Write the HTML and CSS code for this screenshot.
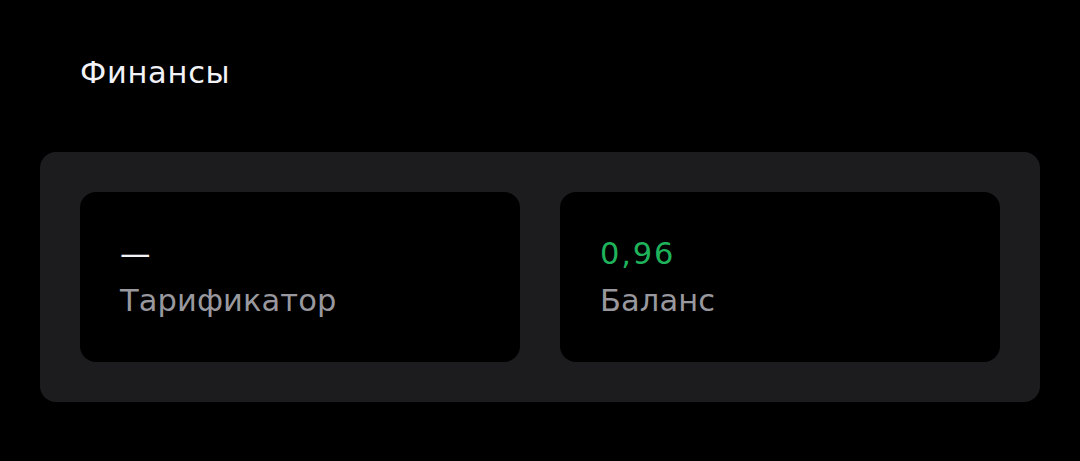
FILE: index.html
```html
<!DOCTYPE html>
<html lang="ru">
<head>
<meta charset="utf-8">
<link rel="stylesheet" href="styles.css">
</head>
<body>
<main class="page">
  <h1 class="title">Финансы</h1>
  <section class="panel">
    <div class="card">
      <div class="value">—</div>
      <div class="label">Тарификатор</div>
    </div>
    <div class="card">
      <div class="value value-green">0,96</div>
      <div class="label">Баланс</div>
    </div>
  </section>
</main>
</body>
</html>
```
FILE: styles.css
```css
html, body {
  margin: 0;
  padding: 0;
  background: #000;
}
body {
  font-family: "DejaVu Sans", Inter, sans-serif;
  color: #f2f2f7;
}
.page {
  padding: 53px 40px 0 40px;
}
.title {
  margin: 0 0 0 40px;
  font-size: 30.5px;
  font-weight: 400;
  line-height: 40px;
  letter-spacing: 0.7px;
  color: #f2f2f7;
}
.panel {
  margin-top: 59px;
  background: #1c1c1e;
  border-radius: 16px;
  padding: 40px;
  display: grid;
  grid-template-columns: 1fr 1fr;
  gap: 40px;
}
.card {
  background: #000;
  border-radius: 16px;
  height: 170px;
  padding: 0 40px;
  display: flex;
  flex-direction: column;
  justify-content: center;
  box-sizing: border-box;
}
.value {
  font-size: 30.5px;
  line-height: 48px;
  letter-spacing: 1.8px;
  color: #f2f2f7;
}
.value-green {
  color: #1fb35c;
}
.label {
  font-size: 30.5px;
  line-height: 46px;
  letter-spacing: 0.1px;
  color: #98989e;
}
```
